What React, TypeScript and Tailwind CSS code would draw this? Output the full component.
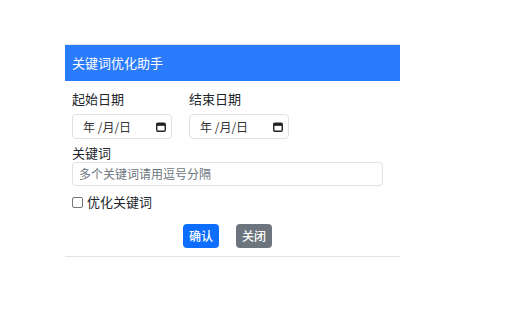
import React from "react";

const cjk = { fontFamily: '"Noto Sans CJK SC", "Noto Sans", sans-serif' };

function CalendarIcon() {
  return (
    <svg width="10" height="10" viewBox="0 0 10 10" className="shrink-0">
      <rect x="0.75" y="1.25" width="8.5" height="8" rx="1.2" fill="none" stroke="#222" strokeWidth="1.4" />
      <rect x="0.75" y="1.25" width="8.5" height="2.6" fill="#222" />
    </svg>
  );
}

function FakeDateInput() {
  return (
    <div className="flex h-[25px] w-[100px] items-center justify-between rounded-[4px] border border-[#dee2e6] bg-white pl-[10px] pr-[5px] text-[12px] text-[#333]">
      <span>年 /月/日</span>
      <CalendarIcon />
    </div>
  );
}

export default function App() {
  return (
    <div className="h-[320px] w-[512px] bg-white pl-[65px] pt-[44px] text-[#212529]" style={cjk}>
      <div className="flex w-[335px] flex-col border-t border-b border-[#e3e3e3] pb-[8px]">
        <div className="flex h-[36px] items-center bg-[#2b7bfd] px-[7px] text-[13px] text-white">
          关键词优化助手
        </div>
        <div className="flex flex-col px-[7px]">
          <div className="mt-[9px] flex h-[18px] items-center text-[13px]">
            <span className="w-[117px]">起始日期</span>
            <span>结束日期</span>
          </div>
          <div className="mt-[6px] flex gap-[17px]">
            <FakeDateInput />
            <FakeDateInput />
          </div>
          <div className="mt-[5px] flex h-[18px] items-center text-[13px]">关键词</div>
          <div className="flex h-[24px] w-[311px] items-center rounded-[4px] border border-[#dee2e6] px-[6px] text-[12px] text-[#6c757d]">
            多个关键词请用逗号分隔
          </div>
          <label className="mt-[7px] flex h-[18px] items-center gap-[4px] text-[13px]">
            <span className="h-[11px] w-[11px] rounded-[2px] border border-[#767676] bg-white" />
            优化关键词
          </label>
          <div className="mt-[13px] flex gap-[17px] pl-[111px]">
            <button className="h-[24px] w-[36px] rounded-[4px] bg-[#0d6efd] text-[12px] font-medium text-white">
              确认
            </button>
            <button className="h-[24px] w-[36px] rounded-[4px] bg-[#6c757d] text-[12px] font-medium text-white">
              关闭
            </button>
          </div>
        </div>
      </div>
    </div>
  );
}
